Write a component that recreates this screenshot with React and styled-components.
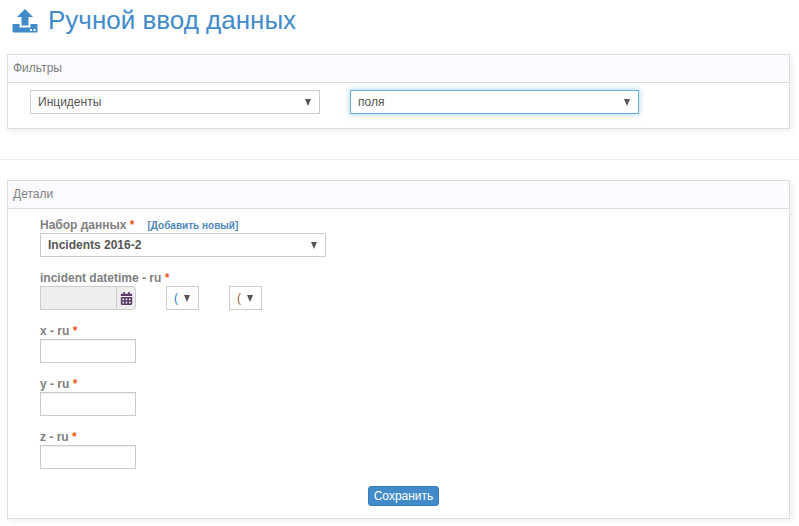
import React from 'react'
import styled, { createGlobalStyle } from 'styled-components'
import { FaCalendarAlt } from 'react-icons/fa'

const Global = createGlobalStyle`
  html, body { margin: 0; padding: 0; background: #fff; }
  body { font-family: "Liberation Sans", Arial, sans-serif; font-size: 12px; color: #666; }
  * { box-sizing: border-box; }
`

function UploadIcon() {
  return (
    <svg width="26" height="25" viewBox="0 0 26 25">
      <path fill="#428bca" d="M13 0 L21 8 L16.500 8 L16.500 16.500 L9.500 16.500 L9.500 8 L5 8 Z" />
      <path fill="#428bca" d="M1.500 15 L7.500 15 L7.500 18.500 L18.500 18.500 L18.500 15 L24.500 15 Q25.500 15 25.500 16 L25.500 22.500 Q25.500 23.500 24.500 23.500 L1.500 23.500 Q0.500 23.500 0.500 22.500 L0.500 16 Q0.500 15 1.500 15 Z" />
      <rect x="18" y="20" width="2" height="2" fill="#fff" />
      <rect x="21.500" y="20" width="2" height="2" fill="#fff" />
    </svg>
  )
}

export default function App() {
  return (
    <Page>
      <Global />
      <Title>
        <UploadIcon />
        <h1>Ручной ввод данных</h1>
      </Title>

      <Panel>
        <PanelHead>Фильтры</PanelHead>
        <FilterRow>
          <Select $w={290}>Инциденты</Select>
          <Select $w={289} $focus>поля</Select>
        </FilterRow>
      </Panel>

      <Divider />

      <Panel>
        <PanelHead>Детали</PanelHead>
        <Form>
          <Field>
            <Label>
              Набор данных <Star>*</Star>
              <AddLink>[Добавить новый]</AddLink>
            </Label>
            <Select $w={286} $bold>Incidents 2016-2</Select>
          </Field>
          <Field>
            <Label>incident datetime - ru <Star>*</Star></Label>
            <DateRow>
              <DateBox>
                <DateInput />
                <CalButton><FaCalendarAlt size={13} color="#5b3d6b" /></CalButton>
              </DateBox>
              <TimeSelect $color="#2f7fc0">(</TimeSelect>
              <TimeSelect $color="#a0603a">(</TimeSelect>
            </DateRow>
          </Field>
          <Field>
            <Label>x - ru <Star>*</Star></Label>
            <TextBox />
          </Field>
          <Field>
            <Label>y - ru <Star>*</Star></Label>
            <TextBox />
          </Field>
          <Field>
            <Label>z - ru <Star>*</Star></Label>
            <TextBox />
          </Field>
          <Actions>
            <SaveButton>Сохранить</SaveButton>
          </Actions>
        </Form>
      </Panel>
    </Page>
  )
}

const Page = styled.div`
  width: 799px;
  height: 526px;
  overflow: hidden;
  padding-top: 8px;
`

const Title = styled.div`
  display: flex;
  align-items: center;
  gap: 10px;
  height: 26px;
  margin: 0 0 20px 12px;

  h1 {
    margin: -2px 0 0;
    font-size: 26px;
    font-weight: 400;
    line-height: 26px;
    color: #428bca;
  }
`

const Panel = styled.section`
  width: 783px;
  margin-left: 7px;
  border: 1px solid #ddd;
  box-shadow: 2px 2px 6px rgba(0, 0, 0, 0.07);
  background: #fff;
`

const PanelHead = styled.div`
  height: 28px;
  line-height: 26px;
  padding-left: 5px;
  font-size: 12px;
  color: #808080;
  background: #fafaff;
  border-bottom: 1px solid #ddd;
`

const FilterRow = styled.div`
  display: flex;
  gap: 30px;
  height: 45px;
  padding: 7px 0 0 22px;
`

const Select = styled.div`
  position: relative;
  width: ${p => p.$w}px;
  height: 24px;
  line-height: 22px;
  padding-left: 7px;
  font-size: 12px;
  font-weight: ${p => (p.$bold ? 700 : 400)};
  color: #555;
  background: #fff;
  border: 1px solid ${p => (p.$focus ? '#66afe9' : '#ccc')};
  box-shadow: ${p => (p.$focus ? '0 0 6px rgba(102, 175, 233, 0.6)' : 'none')};

  &::after {
    content: '';
    position: absolute;
    right: 8px;
    top: 8px;
    border-left: 3.5px solid transparent;
    border-right: 3.5px solid transparent;
    border-top: 7px solid #555;
  }
`

const Divider = styled.hr`
  height: 1px;
  margin: 30px 0 20px;
  border: 0;
  background: #eee;
`

const Form = styled.div`
  display: flex;
  flex-direction: column;
  gap: 13px;
  padding: 8px 0 0 32px;
  height: 309px;
`

const Field = styled.div`
  display: flex;
  flex-direction: column;
`

const Label = styled.label`
  height: 16px;
  line-height: 16px;
  font-size: 12px;
  font-weight: 700;
  color: #808080;
`

const Star = styled.span`
  color: #ee5a1a;
`

const AddLink = styled.a`
  margin-left: 13px;
  font-size: 10px;
  color: #4f86b8;
`

const DateRow = styled.div`
  display: flex;
  gap: 30px;
`

const DateBox = styled.div`
  display: flex;
  width: 96px;
  height: 24px;
`

const DateInput = styled.div`
  flex: 1;
  background: #eee;
  border: 1px solid #ccc;
  border-right: 0;
`

const CalButton = styled.div`
  display: flex;
  align-items: center;
  justify-content: center;
  width: 20px;
  background: #eee;
  border: 1px solid #ccc;
  border-radius: 0 4px 4px 0;
`

const TimeSelect = styled(Select)`
  width: 33px;
  padding-left: 7px;
  color: ${p => p.$color};
`

const TextBox = styled.input`
  display: block;
  width: 96px;
  height: 24px;
  padding: 0 6px;
  border: 1px solid #ccc;
  outline: 0;
  box-shadow: inset 0 1px 1px rgba(0, 0, 0, 0.075);
`

const Actions = styled.div`
  display: flex;
  justify-content: center;
  width: 727px;
  padding-top: 4px;
`

const SaveButton = styled.button`
  width: 71px;
  height: 20px;
  padding: 0;
  font-family: inherit;
  font-size: 12px;
  color: #fff;
  background: #428bca;
  border: 1px solid #357ebd;
  border-radius: 3px;
`
